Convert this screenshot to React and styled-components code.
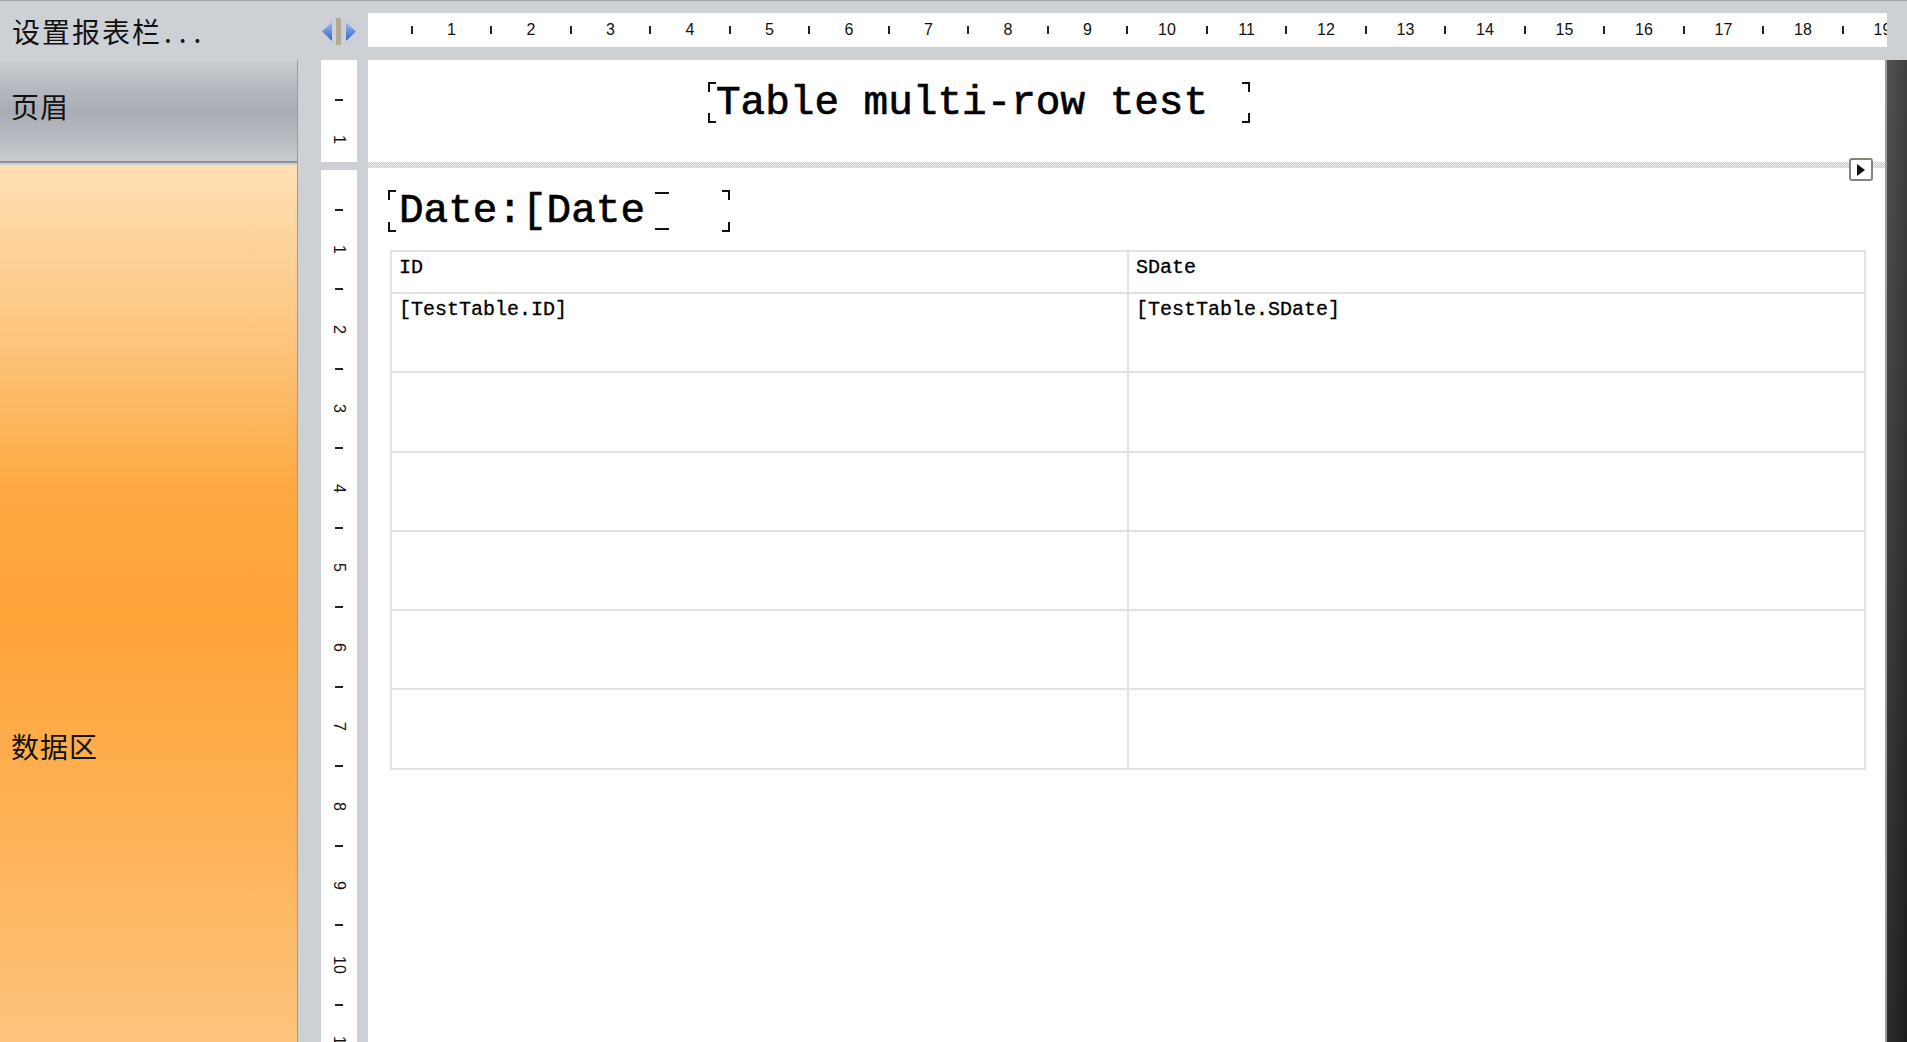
import React from 'react';
import styled, { createGlobalStyle } from 'styled-components';

const GlobalStyle = createGlobalStyle`
  html, body { margin: 0; padding: 0; overflow: hidden; background: #cdd1d6; }
  #root { width: 1907px; height: 1042px; }
`;

const UNIT = 79.5;
const HALF = UNIT / 2;

const Shell = styled.div`
  width: 1907px;
  height: 1042px;
  box-sizing: border-box;
  border-top: 1px solid #a2a6ab;
  background: #cdd1d6;
  display: flex;
  flex-direction: column;
  overflow: hidden;
  font-family: "Noto Sans CJK SC", "Liberation Sans", sans-serif;
`;

const Toolbar = styled.div`
  height: 59px;
  flex-shrink: 0;
  display: flex;
  align-items: flex-start;
`;

const ToolbarTitle = styled.div`
  width: 298px;
  height: 59px;
  box-sizing: border-box;
  padding-left: 12px;
  display: flex;
  align-items: center;
  font-size: 28px;
  letter-spacing: 2px;
  color: #111;
`;

const Dots = styled.span`
  letter-spacing: 7px;
  margin-left: 2px;
`;

const SplitterIcon = styled.svg`
  margin: 16px 11px 0 22px;
  flex-shrink: 0;
`;

const HRuler = styled.div`
  margin-top: 12px;
  width: 1519px;
  height: 34px;
  background: #fff;
  overflow: hidden;
  box-sizing: border-box;
  padding-left: ${HALF * 3 - UNIT - HALF / 2 + 4}px;
  display: grid;
  grid-auto-flow: column;
  grid-auto-columns: ${HALF}px;
  align-items: center;
  justify-items: center;
`;

const HTick = styled.span`
  width: 2px;
  height: 8px;
  background: #222;
`;

const HNum = styled.span`
  font-family: "Liberation Sans", sans-serif;
  font-size: 16px;
  color: #111;
  white-space: nowrap;
`;

const Body = styled.div`
  flex: 1;
  display: flex;
  min-height: 0;
`;

const BandList = styled.div`
  width: 297px;
  border-right: 1px solid #a39a8c;
  display: flex;
  flex-direction: column;
  flex-shrink: 0;
`;

const HeaderBandLabel = styled.div`
  height: 103px;
  border-bottom: 2px solid #8f9398;
  box-sizing: border-box;
  background: linear-gradient(to bottom, #cbced2 0%, #b4b8be 30%, #a8adb4 50%, #b8bcc1 78%, #c9cbcf 100%);
  padding: 26px 0 0 11px;
  font-size: 28px;
  letter-spacing: 1px;
  color: #111;
`;

const DataBandLabel = styled.div`
  flex: 1;
  margin-top: 2px;
  background: linear-gradient(to bottom, #fedfb4 0%, #fdc57e 20%, #fea942 37%, #fea53a 52%, #feb257 76%, #fec47c 100%);
  padding: 561px 0 0 11px;
  font-size: 28px;
  letter-spacing: 1px;
  color: #111;
`;

const VRuler = styled.div`
  width: 36px;
  margin: 0 11px 0 23px;
  display: flex;
  flex-direction: column;
  gap: 8px;
  flex-shrink: 0;
`;

const VRulerSegment = styled.div`
  background: #fff;
  overflow: hidden;
  box-sizing: border-box;
  padding-top: ${HALF / 2}px;
  display: grid;
  grid-auto-rows: ${HALF}px;
  align-items: center;
  justify-items: center;
  ${(p) => (p.$fill ? 'flex: 1;' : `height: ${p.$h}px; flex-shrink: 0;`)}
`;

const VTick = styled.span`
  width: 8px;
  height: 2px;
  background: #222;
`;

const VNum = styled.span`
  writing-mode: vertical-rl;
  font-family: "Liberation Sans", sans-serif;
  font-size: 16px;
  color: #111;
  line-height: 1;
`;

const Page = styled.div`
  width: 1517px;
  flex-shrink: 0;
  background: #fff;
  display: flex;
  flex-direction: column;
`;

const Band = styled.div`
  position: relative;
  ${(p) => (p.$fill ? 'flex: 1;' : `height: ${p.$h}px; flex-shrink: 0;`)}
`;

const BandSeparator = styled.div`
  position: relative;
  height: 6px;
  flex-shrink: 0;
  background: repeating-conic-gradient(#c9c9c9 0% 25%, #f3f3f3 0% 50%) 0 0 / 2px 2px;
`;

const BandMarker = styled.div`
  position: absolute;
  right: 12px;
  top: -4px;
  width: 24px;
  height: 23px;
  box-sizing: border-box;
  border: 2px solid #85837a;
  border-radius: 3px;
  background: #fff;
  display: flex;
  align-items: center;
  justify-content: center;
`;

const ReportObject = styled.div`
  position: absolute;
  left: ${(p) => p.$x}px;
  top: ${(p) => p.$y}px;
  width: ${(p) => p.$w}px;
  height: ${(p) => p.$h}px;
  box-sizing: border-box;
  padding-left: ${(p) => p.$pad}px;
  display: flex;
  align-items: stretch;
`;

const Corner = styled.span`
  position: absolute;
  width: 6px;
  height: 8px;
  border: 0 solid #111;
  ${(p) => (p.$v === 't' ? 'top: 0; border-top-width: 2px;' : 'bottom: 0; border-bottom-width: 2px;')}
  ${(p) => (p.$h === 'l' ? 'left: 0; border-left-width: 2px;' : 'right: 0; border-right-width: 2px;')}
`;

const BigText = styled.span`
  font-family: "Liberation Mono", monospace;
  font-size: 41px;
  line-height: 48px;
  margin-top: -3px;
  color: #000;
  -webkit-text-stroke: 0.7px #000;
  white-space: pre;
`;

const ClipMark = styled.span`
  width: 14px;
  margin: 2px 0 2px 10px;
  border-top: 2px solid #111;
  border-bottom: 2px solid #111;
`;

const GridTable = styled.table`
  position: absolute;
  left: 22px;
  top: 82px;
  width: 1476px;
  border-collapse: collapse;
  table-layout: fixed;
  font-family: "Liberation Mono", monospace;
  font-size: 20px;
  color: #000;
`;

const Cell = styled.td`
  border: 2px solid #e2e2e2;
  height: ${(p) => p.$h}px;
  box-sizing: border-box;
  padding: 5px 0 0 7px;
  vertical-align: top;
  line-height: 22px;
  -webkit-text-stroke: 0.3px #000;
  white-space: pre;
`;

const DarkEdge = styled.div`
  flex: 1;
  border-left: 2px solid #9c9c9c;
  background: linear-gradient(to right, rgba(255,255,255,0.06), rgba(0,0,0,0.1)),
    linear-gradient(to bottom, #474747 0%, #333 50%, #1f1f1f 100%);
`;

function Rulers({ count, Tick, Num }) {
  const items = [];
  for (let n = 1; n <= count; n += 1) {
    items.push(<Tick key={`t${n}`} />);
    items.push(<Num key={`n${n}`}>{n}</Num>);
  }
  return items;
}

function Frame() {
  return (
    <>
      <Corner $v="t" $h="l" />
      <Corner $v="t" $h="r" />
      <Corner $v="b" $h="l" />
      <Corner $v="b" $h="r" />
    </>
  );
}

const rows = [
  ['[TestTable.ID]', '[TestTable.SDate]'],
  ['', ''],
  ['', ''],
  ['', ''],
  ['', ''],
  ['', ''],
];

export default function App() {
  return (
    <>
      <GlobalStyle />
      <Shell>
        <Toolbar>
          <ToolbarTitle>
            设置报表栏<Dots>...</Dots>
          </ToolbarTitle>
          <SplitterIcon width="37" height="28" viewBox="0 0 37 28">
            <defs>
              <linearGradient id="splitBlue" x1="0" y1="0" x2="0" y2="1">
                <stop offset="0" stopColor="#9dbdf0" />
                <stop offset="1" stopColor="#2f63c9" />
              </linearGradient>
            </defs>
            <polygon points="12,5 2,14.5 12,24" fill="url(#splitBlue)" />
            <rect x="16" y="1" width="5" height="27" fill="#b2aa93" />
            <polygon points="26,5 36,14.5 26,24" fill="url(#splitBlue)" />
          </SplitterIcon>
          <HRuler>
            <Rulers count={19} Tick={HTick} Num={HNum} />
          </HRuler>
        </Toolbar>
        <Body>
          <BandList>
            <HeaderBandLabel>页眉</HeaderBandLabel>
            <DataBandLabel>数据区</DataBandLabel>
          </BandList>
          <VRuler>
            <VRulerSegment $h={102}>
              <Rulers count={1} Tick={VTick} Num={VNum} />
            </VRulerSegment>
            <VRulerSegment $fill>
              <Rulers count={11} Tick={VTick} Num={VNum} />
            </VRulerSegment>
          </VRuler>
          <Page>
            <Band $h={102}>
              <ReportObject $x={340} $y={22} $w={542} $h={41} $pad={8}>
                <Frame />
                <BigText>Table multi-row test</BigText>
              </ReportObject>
            </Band>
            <BandSeparator>
              <BandMarker>
                <svg width="8" height="12" viewBox="0 0 8 12">
                  <polygon points="0,0 8,6 0,12" fill="#111" />
                </svg>
              </BandMarker>
            </BandSeparator>
            <Band $fill>
              <ReportObject $x={20} $y={22} $w={342} $h={42} $pad={11}>
                <Frame />
                <BigText>Date:[Date</BigText>
                <ClipMark />
              </ReportObject>
              <GridTable>
                <tbody>
                  <tr>
                    <Cell $h={42}>ID</Cell>
                    <Cell $h={42}>SDate</Cell>
                  </tr>
                  {rows.map((r, i) => (
                    <tr key={i}>
                      <Cell $h={79.3}>{r[0]}</Cell>
                      <Cell $h={79.3}>{r[1]}</Cell>
                    </tr>
                  ))}
                </tbody>
              </GridTable>
            </Band>
          </Page>
          <DarkEdge />
        </Body>
      </Shell>
    </>
  );
}
